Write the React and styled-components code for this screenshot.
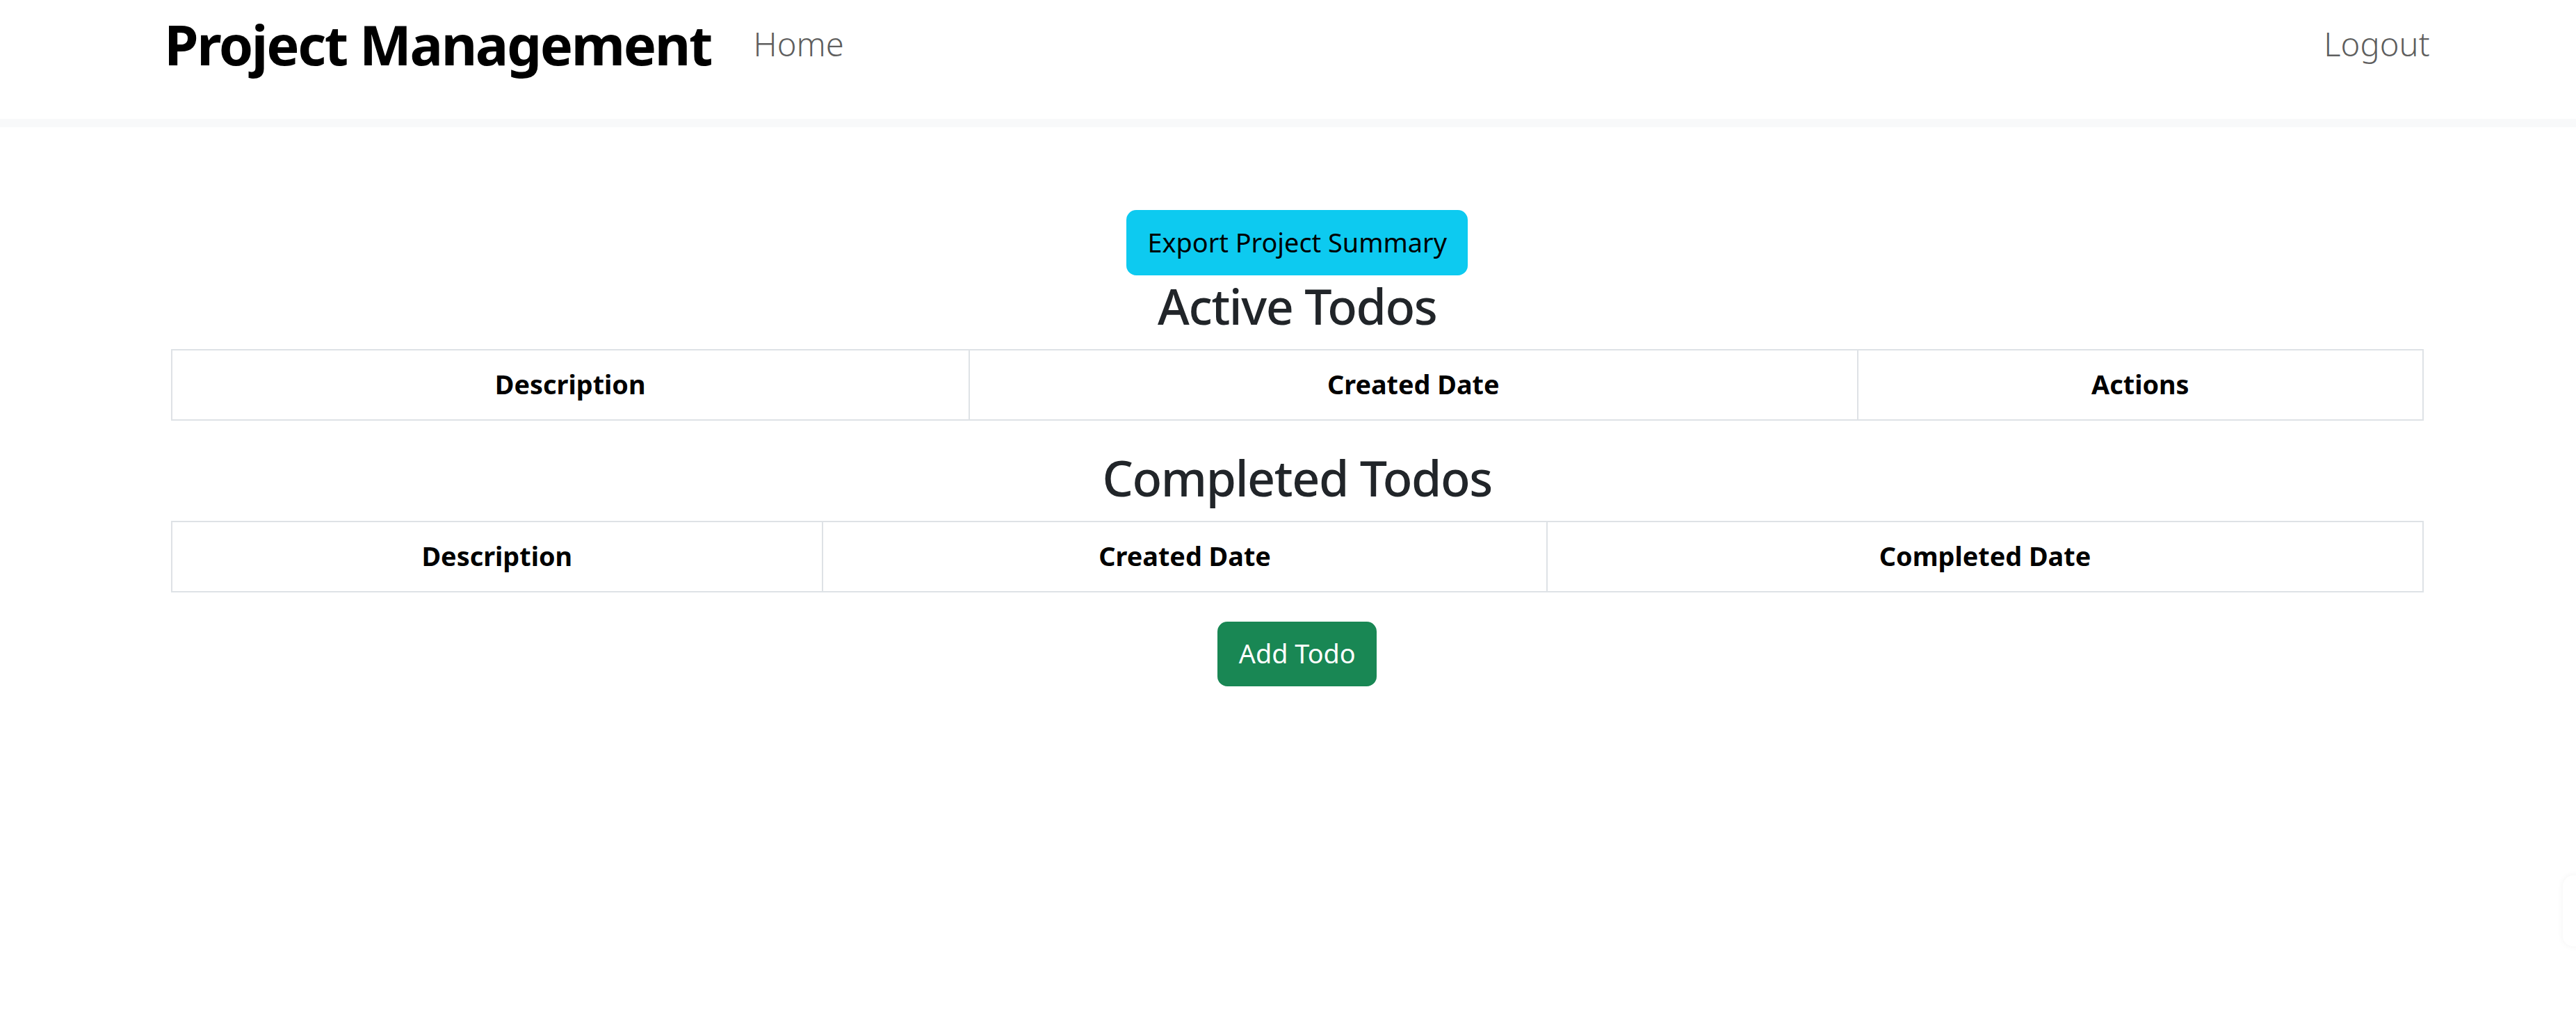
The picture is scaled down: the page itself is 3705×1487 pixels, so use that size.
import React from "react";
import styled, { createGlobalStyle } from "styled-components";

// the reference is a bootstrap page shot at ~2.36x, so 1rem = 16 * 2.363px
const GlobalStyle = createGlobalStyle`
  html {
    font-size: 37.8px;
  }
  body {
    margin: 0;
    background: #fff;
    color: #212529;
    font-family: "Noto Sans", "Open Sans", "Liberation Sans", sans-serif;
    font-size: 1rem;
    line-height: 1.5;
  }
`;

const Page = styled.div`
  min-height: 100vh;
  position: relative;
  overflow: hidden;
`;

const Navbar = styled.header`
  display: flex;
  align-items: center;
  height: 3.375rem;
  padding: 0 5.56rem 0 6.25rem;
  margin-bottom: 1.15rem;
`;

const Brand = styled.a`
  font-size: 2.1rem;
  font-weight: 700;
  color: #000;
  text-decoration: none;
  letter-spacing: -0.03em;
  line-height: 1.2;
`;

const NavLink = styled.a`
  font-size: 1.25rem;
  font-weight: 300;
  color: rgba(0, 0, 0, 0.65);
  text-decoration: none;
  margin-left: ${(p) => (p.$push ? "auto" : "1.6rem")};
`;

const Band = styled.div`
  height: 0.3175rem;
  background: #f8f9fa;
`;

const Main = styled.main`
  padding: 3.16rem 5.8rem 0 6.5rem;
  text-align: center;
`;

const Button = styled.button`
  display: inline-block;
  margin-top: ${(p) => p.$mt || 0};
  font-family: inherit;
  font-size: 1rem;
  line-height: 1.5;
  padding: 0.43rem 0.75rem;
  border: 0.0625rem solid ${(p) => p.$bg};
  border-radius: 0.375rem;
  background: ${(p) => p.$bg};
  color: ${(p) => p.$fg};
  cursor: pointer;
`;

const Heading = styled.h2`
  margin: 0 0 0.5rem;
  font-size: 1.85rem;
  font-weight: 500;
  line-height: 1.25;
  letter-spacing: -0.02em;
  color: #212529;
`;

const Table = styled.table`
  width: 100%;
  border-collapse: collapse;
  margin-bottom: 1rem;
  table-layout: fixed;
`;

const Th = styled.th`
  width: ${(p) => p.$w};
  padding: 0.56rem 0.5rem;
  border: 0.0625rem solid #dee2e6;
  font-weight: 700;
  color: #000;
  text-align: center;
`;

const Widget = styled.div`
  position: absolute;
  right: -2rem;
  top: 33.3rem;
  width: 2.5rem;
  height: 2.7rem;
  border-radius: 0.4rem;
  background: #fff;
  box-shadow: 0 0 0.25rem rgba(0, 0, 0, 0.05);
`;

const TodoTable = ({ columns }) => (
  <Table>
    <thead>
      <tr>
        {columns.map((c) => (
          <Th key={c.label} $w={c.width}>
            {c.label}
          </Th>
        ))}
      </tr>
    </thead>
    <tbody></tbody>
  </Table>
);

export default function App() {
  return (
    <Page>
      <GlobalStyle />
      <Navbar>
        <Brand href="#">Project Management</Brand>
        <NavLink href="#">Home</NavLink>
        <NavLink href="#" $push>
          Logout
        </NavLink>
      </Navbar>
      <Band />
      <Main>
        <Button $bg="#0dcaf0" $fg="#000">
          Export Project Summary
        </Button>
        <Heading>Active Todos</Heading>
        <TodoTable
          columns={[
            { label: "Description", width: "35.5%" },
            { label: "Created Date", width: "39.7%" },
            { label: "Actions", width: "24.8%" },
          ]}
        />
        <Heading>Completed Todos</Heading>
        <TodoTable
          columns={[
            { label: "Description", width: "28.75%" },
            { label: "Created Date", width: "32.15%" },
            { label: "Completed Date", width: "39.1%" },
          ]}
        />
        <Button $bg="#198754" $fg="#fff" $mt="0.1rem">
          Add Todo
        </Button>
      </Main>
      <Widget />
    </Page>
  );
}
